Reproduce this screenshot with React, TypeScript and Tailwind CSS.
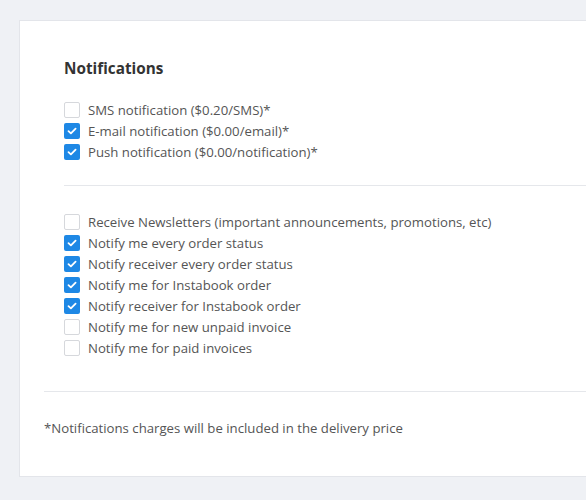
const groupOne = [
  { label: 'SMS notification ($0.20/SMS)*', checked: false },
  { label: 'E-mail notification ($0.00/email)*', checked: true },
  { label: 'Push notification ($0.00/notification)*', checked: true },
]

const groupTwo = [
  { label: 'Receive Newsletters (important announcements, promotions, etc)', checked: false },
  { label: 'Notify me every order status', checked: true },
  { label: 'Notify receiver every order status', checked: true },
  { label: 'Notify me for Instabook order', checked: true },
  { label: 'Notify receiver for Instabook order', checked: true },
  { label: 'Notify me for new unpaid invoice', checked: false },
  { label: 'Notify me for paid invoices', checked: false },
]

function Check({ checked }: { checked: boolean }) {
  if (checked) {
    return (
      <span className="flex h-4 w-4 shrink-0 items-center justify-center rounded-[2px] bg-[#1e88e5]">
        <svg width="10" height="8" viewBox="0 0 10 8" fill="none">
          <path d="M1.5 4.2 L3.9 6.4 L8.6 1.6" stroke="white" strokeWidth="1.8" strokeLinecap="round" strokeLinejoin="round" />
        </svg>
      </span>
    )
  }
  return <span className="h-4 w-4 shrink-0 rounded-[2px] border border-[#d6d8dc] bg-white" />
}

function Row({ label, checked }: { label: string; checked: boolean }) {
  return (
    <label className="flex h-[21px] items-center gap-2 text-[13.2px] text-[#555]">
      <Check checked={checked} />
      <span>{label}</span>
    </label>
  )
}

export default function App() {
  return (
    <div
      className="min-h-[500px] bg-[#eff1f5] pl-[19px] pt-[20px]"
      style={{ fontFamily: '"Open Sans", "Noto Sans", sans-serif' }}
    >
      <div className="h-[457px] border border-r-0 border-[#e3e5ea] bg-white pl-[24px]">
        <div className="pl-[20px] pt-[36px]">
          <h2 className="text-[15.3px] font-bold text-[#333]">Notifications</h2>
          <div className="mt-[20px]">
            {groupOne.map((item) => (
              <Row key={item.label} {...item} />
            ))}
          </div>
          <div className="mt-[22px] border-t border-[#e5e7eb]" />
          <div className="mt-[26px]">
            {groupTwo.map((item) => (
              <Row key={item.label} {...item} />
            ))}
          </div>
        </div>
        <div className="mt-[32px] border-t border-[#e5e7eb]" />
        <p className="mt-[27px] text-[13.2px] text-[#555]">
          *Notifications charges will be included in the delivery price
        </p>
      </div>
    </div>
  )
}
